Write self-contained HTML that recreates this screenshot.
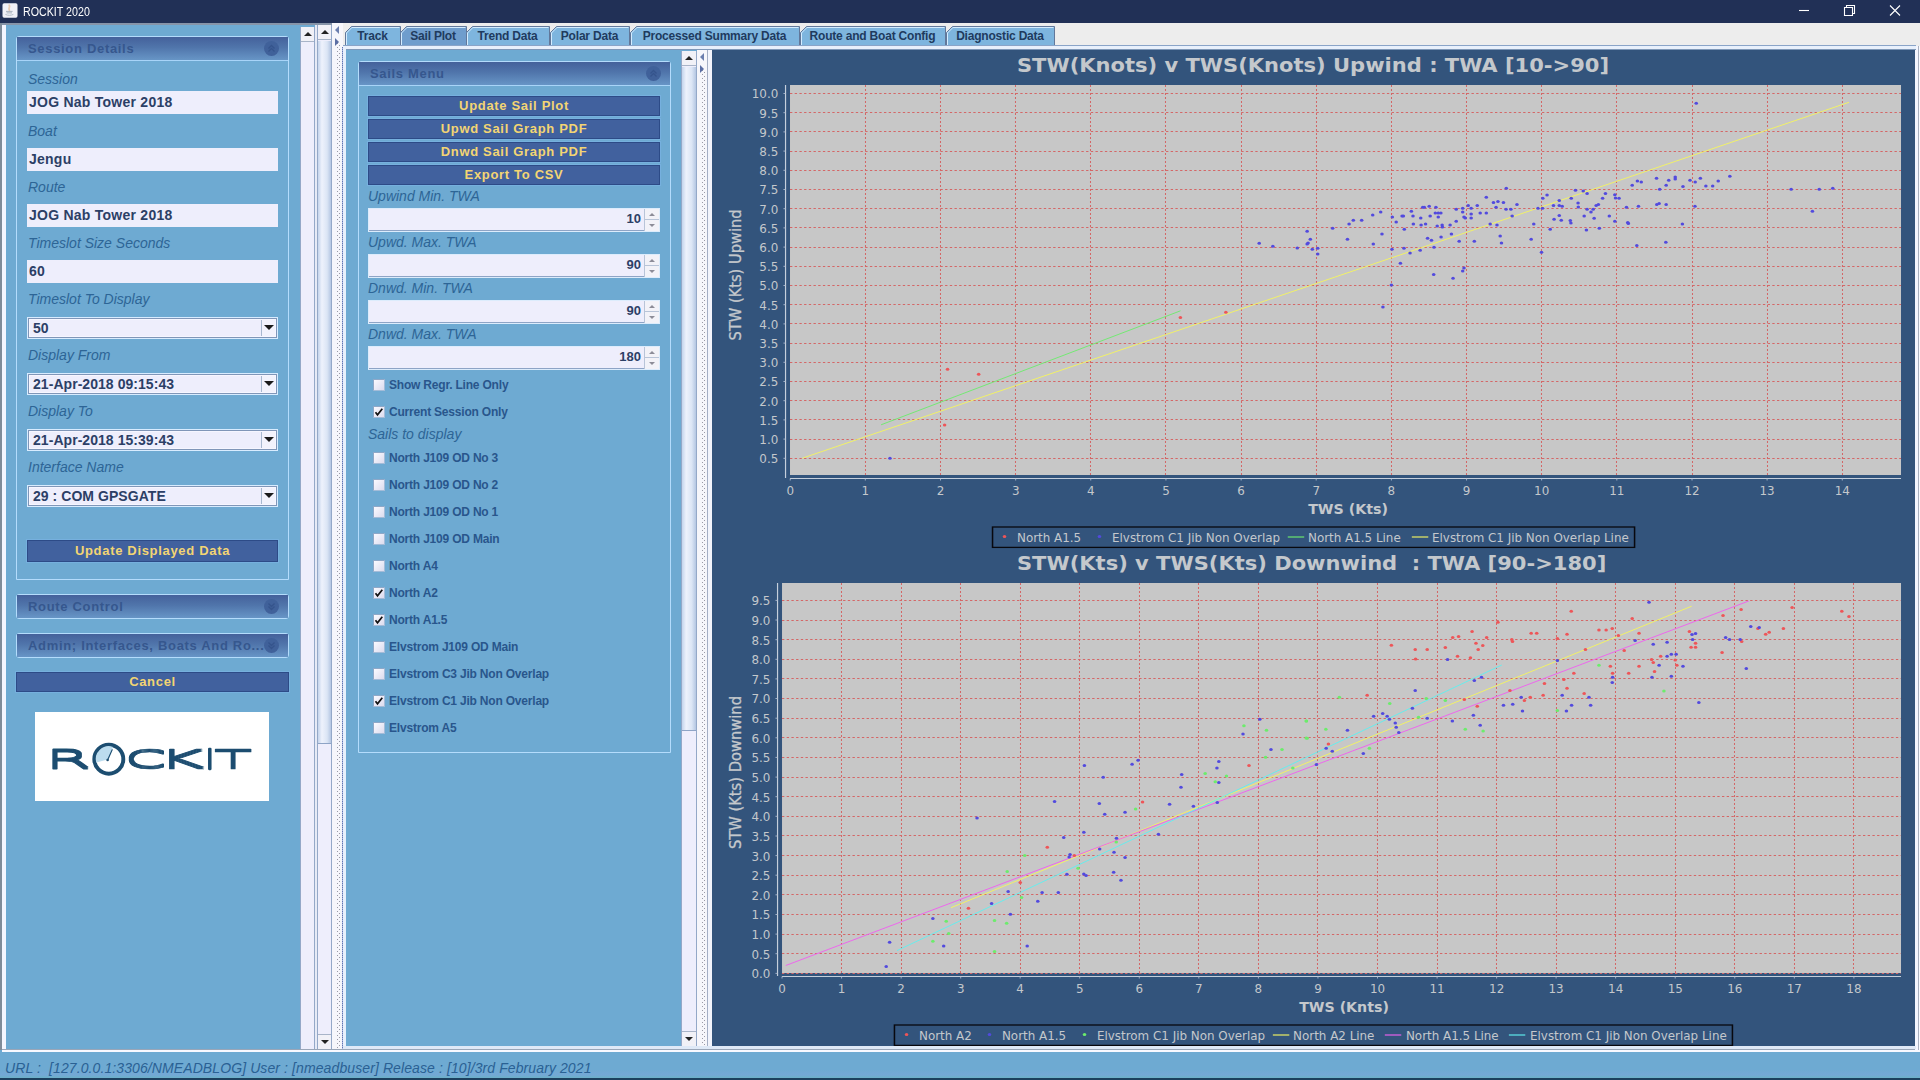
<!DOCTYPE html>
<html lang="en"><head><meta charset="utf-8"><title>ROCKIT 2020</title>
<style>
*{box-sizing:border-box;margin:0;padding:0}
html,body{width:1920px;height:1080px;overflow:hidden}
body{position:relative;background:#6eaad2;font-family:"Liberation Sans",sans-serif;font-size:13px;color:#2c4370}
.abs{position:absolute}
#titlebar{left:0;top:0;width:1920px;height:23px;background:#213056}
#ttl{left:23px;top:4px;color:#fff;font-size:12px;line-height:16px;transform:scaleX(.89);transform-origin:0 0;white-space:nowrap}
.lbl{font-style:italic;font-size:14px;color:#2d6596;line-height:16px;white-space:nowrap}
.tf{background:#eeeefc;height:23px;font-weight:bold;font-size:14px;color:#2c3f66;line-height:23px;padding-left:2px;white-space:nowrap;letter-spacing:0.25px}
.cb{background:#eeeefc;height:22px;border:1px solid #d8ecff;box-shadow:inset 0 0 0 1px #8096b8, inset 0 0 0 2px #f6f6ff;font-weight:bold;font-size:14px;color:#2c3f66;line-height:20px;padding-left:5px;white-space:nowrap;letter-spacing:0.05px}
.cb i{position:absolute;right:2px;top:2px;width:14px;height:16px;border-left:1px solid #a8b8d0;background:#f2f2fc}
.cb i:after{content:"";position:absolute;left:2px;top:5px;border-left:5px solid transparent;border-right:5px solid transparent;border-top:5px solid #1a1a1a}
.btn{background:#41619e;border:1px solid #2d4b87;box-shadow:0 0 0 1px #76b0de;color:#f3d573;font-weight:bold;font-size:13px;text-align:center;white-space:nowrap;letter-spacing:0.68px}
.cp{border:1px solid #b4dcfc;border-radius:3px 3px 0 0}
.cph{left:0;top:0;right:0;height:24px;background:linear-gradient(#44619b,#5075ab 45%,#6795c6);border-bottom:1px solid #a8d4f8}
.cpt{left:11px;top:4px;font-weight:bold;font-size:13px;color:#36578e;line-height:16px;white-space:nowrap;letter-spacing:0.68px}
.circ{width:15px;height:15px;border-radius:8px;background:#5373ae}
.chk{width:12px;height:12px;background:linear-gradient(135deg,#fafaff,#dcdcee);border:1px solid #a4bcd8;border-top-color:#8ea8c8;border-left-color:#8ea8c8}
.ckl{font-weight:bold;font-size:12px;color:#29568c;line-height:14px;white-space:nowrap;letter-spacing:-0.2px}
.sp{background:#eeeefc;height:24px;border:1px solid #dcecfc;box-shadow:inset 0 -1px 0 #8ea4c6;font-weight:bold;font-size:13px;color:#2c3f66;line-height:20px;text-align:right;padding-right:18px}
.tab{top:27px;height:18px;font-weight:bold;font-size:12px;color:#1f3b5e;line-height:18px;text-align:center;white-space:nowrap;letter-spacing:-0.2px;padding-right:2px}
</style></head>
<body>
<div id="titlebar" class="abs">
<svg class="abs" style="left:2px;top:3px" width="16" height="15" viewBox="0 0 16 15"><rect x="0.5" y="0.3" width="15" height="14.4" rx="1.6" fill="#f0f1f7"/><path d="M7.2 2.2c1.6 1.6-1.4 2.8 0.2 5" stroke="#e9cdb4" stroke-width="1.8" fill="none" stroke-linecap="round"/><path d="M4 8.4h6.6M4.6 9.9h5.4" stroke="#a9b2be" stroke-width="1" fill="none"/><path d="M3.4 11.4c2.4 1.2 5.6 1.2 8 0" stroke="#b4bdc8" stroke-width="1" fill="none"/></svg>
<div id="ttl" class="abs">ROCKIT 2020</div>
<svg class="abs" style="left:1790px;top:0" width="130" height="23" viewBox="0 0 130 23"><g stroke="#fff" stroke-width="1.1" fill="none"><path d="M9 10.5h10"/><path d="M54.5 7.5h8v8h-8z"/><path d="M56.5 7.5v-2h8v8h-2"/><path d="M100 5.5l10 10M110 5.5l-10 10"/></g></svg>
</div>
<div class="abs" style="left:0;top:23px;width:332px;height:2px;background:#8694a8"></div>
<div class="abs" style="left:0;top:23px;width:2px;height:1027px;background:#7f8c9a"></div>
<div class="abs" style="left:2px;top:25px;width:4px;height:1026px;background:#f4f6ff"></div>
<div class="abs" style="left:2px;top:1049px;width:1918px;height:3px;background:#f8f9ff;border-top:1px solid #9aa6b8"></div>
<div class="abs cp" style="left:16px;top:36px;width:273px;height:544px">
<div class="abs cph"><div class="abs cpt">Session Details</div><svg class="abs" style="left:247px;top:4px" width="15" height="15" viewBox="0 0 15 15"><circle cx="7.5" cy="7.5" r="7.5" fill="#40619a"/><path d="M4.5 7.5l3-3 3 3M4.5 10.5l3-3 3 3" stroke="#35548c" stroke-width="1.3" fill="none"/></svg></div>
<div class="abs lbl" style="left:11px;top:34px">Session</div>
<div class="abs lbl" style="left:11px;top:86px">Boat</div>
<div class="abs lbl" style="left:11px;top:142px">Route</div>
<div class="abs lbl" style="left:11px;top:198px">Timeslot Size Seconds</div>
<div class="abs lbl" style="left:11px;top:254px">Timeslot To Display</div>
<div class="abs lbl" style="left:11px;top:310px">Display From</div>
<div class="abs lbl" style="left:11px;top:366px">Display To</div>
<div class="abs lbl" style="left:11px;top:422px">Interface Name</div>
<div class="abs tf" style="left:10px;top:54px;width:251px">JOG Nab Tower 2018</div>
<div class="abs tf" style="left:10px;top:111px;width:251px">Jengu</div>
<div class="abs tf" style="left:10px;top:167px;width:251px">JOG Nab Tower 2018</div>
<div class="abs tf" style="left:10px;top:223px;width:251px">60</div>
<div class="abs cb" style="left:10px;top:280px;width:251px">50<i></i></div>
<div class="abs cb" style="left:10px;top:336px;width:251px">21-Apr-2018 09:15:43<i></i></div>
<div class="abs cb" style="left:10px;top:392px;width:251px">21-Apr-2018 15:39:43<i></i></div>
<div class="abs cb" style="left:10px;top:448px;width:251px">29 : COM GPSGATE<i></i></div>
<div class="abs btn" style="left:10px;top:503px;width:251px;height:22px;line-height:20px">Update Displayed Data</div>
</div>
<div class="abs cp" style="left:16px;top:594px;width:273px;height:25px;border-radius:3px"><div class="abs cph" style="border-bottom:none;height:23px"><div class="abs cpt">Route Control</div><svg class="abs" style="left:247px;top:4px" width="15" height="15" viewBox="0 0 15 15"><circle cx="7.5" cy="7.5" r="7.5" fill="#40619a"/><path d="M4.5 4.5l3 3 3-3M4.5 7.5l3 3 3-3" stroke="#35548c" stroke-width="1.3" fill="none"/></svg></div></div>
<div class="abs cp" style="left:16px;top:633px;width:273px;height:25px;border-radius:3px"><div class="abs cph" style="border-bottom:none;height:23px"><div class="abs cpt">Admin; Interfaces, Boats And Ro...</div><svg class="abs" style="left:247px;top:4px" width="15" height="15" viewBox="0 0 15 15"><circle cx="7.5" cy="7.5" r="7.5" fill="#40619a"/><path d="M4.5 4.5l3 3 3-3M4.5 7.5l3 3 3-3" stroke="#35548c" stroke-width="1.3" fill="none"/></svg></div></div>
<div class="abs btn" style="left:16px;top:672px;width:273px;height:20px;line-height:18px">Cancel</div>
<div class="abs" style="left:35px;top:712px;width:234px;height:89px;background:#fff"></div>
<svg class="abs" style="left:35px;top:712px" width="234" height="89" viewBox="0 0 234 89">
<filter id="lgm" x="-5%" y="-20%" width="110%" height="140%"><feMorphology operator="dilate" radius="0 1"/></filter>
<g filter="url(#lgm)" font-family="'DejaVu Sans Light','DejaVu Sans',sans-serif" font-weight="200" font-size="24.2" fill="#1c4d70" stroke="#1c4d70" stroke-width="0.75" stroke-linejoin="round">
<text transform="translate(10.3 55.9) scale(2.72 1)">R</text>
<text transform="translate(89.8 55.9) scale(2.46 1)">C</text>
<text transform="translate(123 55.9) scale(2.9 1)">K</text>
<text transform="translate(171.3 55.9)" stroke-width="2.3">I</text>
<text transform="translate(179.6 55.9) scale(2.52 1)">T</text>
</g>
<circle cx="73.8" cy="47.2" r="14.5" fill="#ffffff" stroke="#1c4d70" stroke-width="3.9"/>
<path d="M73.8 47.2L61.2 50.5A13 13 0 0 1 78 34.9Z" fill="#bcdcee"/>
<path d="M72.6 48l4.6-10.2" stroke="#1c4d70" stroke-width="1.1" stroke-linecap="round"/><circle cx="72.6" cy="48" r="1.3" fill="#1c4d70"/>
</svg>
<div class="abs" style="left:300px;top:27px;width:15px;height:1022px;background:#eeeefc;border-left:1px solid #94a8c8;border-right:1px solid #94a8c8"><div class="abs" style="left:0;top:0;width:100%;height:15px;background:#f1f1f7;border-bottom:1px solid #a8b4c8"><div class="abs" style="left:3px;top:5px;border-left:4px solid transparent;border-right:4px solid transparent;border-bottom:4px solid #222"></div></div></div>
<div class="abs" style="left:317px;top:25px;width:15px;height:1024px;background:#eeeefc;border-left:1px solid #94a8c8;border-right:1px solid #94a8c8"><div class="abs" style="left:0;top:16px;width:100%;height:703px;background:linear-gradient(90deg,#c4d4ec,#eef2fc 30%,#dbe5f5 70%,#b4c6e2);border-bottom:1px solid #8ea4c6"></div><div class="abs" style="left:0;top:0;width:100%;height:15px;background:#f1f1f7;border-bottom:1px solid #a8b4c8"><div class="abs" style="left:3px;top:5px;border-left:4px solid transparent;border-right:4px solid transparent;border-bottom:4px solid #222"></div></div><div class="abs" style="left:0;bottom:0;width:100%;height:15px;background:#f1f1f7;border-top:1px solid #a8b4c8"><div class="abs" style="left:3px;top:5px;border-left:4px solid transparent;border-right:4px solid transparent;border-top:4px solid #222"></div></div></div>
<div class="abs" style="left:315px;top:25px;width:2px;height:1024px;background:#e6eaf6"></div>
<div class="abs" style="left:332px;top:23px;width:11px;height:1026px;background:#f6f6fb"><div class="abs" style="left:5px;top:20px;width:1px;bottom:0;background-image:linear-gradient(#9a9aa6 1px,transparent 1px);background-size:1px 4px"></div><div class="abs" style="left:7px;top:22px;width:1px;bottom:0;background-image:linear-gradient(#9a9aa6 1px,transparent 1px);background-size:1px 4px"></div><div class="abs" style="left:10px;top:24px;width:1px;bottom:0;background-image:linear-gradient(#6176b4 1px,#aab6dc 1px);background-size:1px 2px"></div><div class="abs" style="left:3px;top:3px;border-top:4px solid transparent;border-bottom:4px solid transparent;border-right:4px solid #6b7eae"></div><div class="abs" style="left:3px;top:15px;border-top:4px solid transparent;border-bottom:4px solid transparent;border-left:4px solid #5b6ea4"></div></div>
<div class="abs" style="left:0;top:1070px;width:1920px;height:8px;background:linear-gradient(#6eaad2,#74a8d6 60%,#6cb0c8)"></div><div class="abs lbl" style="left:5px;top:1060px;color:#2a6194;letter-spacing:0.1px">URL :&nbsp; [127.0.0.1:3306/NMEADBLOG] User : [nmeadbuser] Release : [10]/3rd February 2021</div><div class="abs" style="left:0;top:1078px;width:1920px;height:2px;background:#1c3f5e"></div>
<div class="abs" style="left:343px;top:23px;width:1577px;height:23px;background:#ededed"></div>
<div class="abs" style="left:1915px;top:46px;width:5px;height:1004px;background:#f4f6ff;border-right:1px solid #f8faff"></div><div class="abs" style="left:1918px;top:46px;width:1px;height:1004px;background:#a8b0c0"></div>
<svg class="abs" style="left:343px;top:25px" width="1572" height="22" viewBox="343 25 1572 22"><path d="M345.5 45.5 V32.5 L351.5 26.5 H400.5 V45.5" fill="#7eb5de" stroke="#62789a" stroke-width="1"/><path d="M346.5 45 V33 L351.9 27.5 H399.5" fill="none" stroke="#d4ecff" stroke-width="1"/><path d="M400.5 47 V32.5 L406.5 26.5 H466.5 V47" fill="#6f9dcd" stroke="#62789a" stroke-width="1"/><path d="M401.5 47 V33 L406.9 27.5 H465.5" fill="none" stroke="#d4ecff" stroke-width="1"/><path d="M466.5 45.5 V32.5 L472.5 26.5 H549.5 V45.5" fill="#7eb5de" stroke="#62789a" stroke-width="1"/><path d="M467.5 45 V33 L472.9 27.5 H548.5" fill="none" stroke="#d4ecff" stroke-width="1"/><path d="M550.5 45.5 V32.5 L556.5 26.5 H629.5 V45.5" fill="#7eb5de" stroke="#62789a" stroke-width="1"/><path d="M551.5 45 V33 L556.9 27.5 H628.5" fill="none" stroke="#d4ecff" stroke-width="1"/><path d="M630.5 45.5 V32.5 L636.5 26.5 H799.5 V45.5" fill="#7eb5de" stroke="#62789a" stroke-width="1"/><path d="M631.5 45 V33 L636.9 27.5 H798.5" fill="none" stroke="#d4ecff" stroke-width="1"/><path d="M800.5 45.5 V32.5 L806.5 26.5 H945.5 V45.5" fill="#7eb5de" stroke="#62789a" stroke-width="1"/><path d="M801.5 45 V33 L806.9 27.5 H944.5" fill="none" stroke="#d4ecff" stroke-width="1"/><path d="M946.5 45.5 V32.5 L952.5 26.5 H1054.5 V45.5" fill="#7eb5de" stroke="#62789a" stroke-width="1"/><path d="M947.5 45 V33 L952.9 27.5 H1053.5" fill="none" stroke="#d4ecff" stroke-width="1"/></svg>
<div class="abs tab" style="left:346px;width:55px">Track</div>
<div class="abs tab" style="left:401px;width:66px">Sail Plot</div>
<div class="abs tab" style="left:467px;width:83px">Trend Data</div>
<div class="abs tab" style="left:551px;width:79px">Polar Data</div>
<div class="abs tab" style="left:631px;width:169px">Processed Summary Data</div>
<div class="abs tab" style="left:801px;width:145px">Route and Boat Config</div>
<div class="abs tab" style="left:947px;width:108px">Diagnostic Data</div>
<div class="abs" style="left:343px;top:45px;width:1573px;height:5px;background:#e8f0fc;border-top:1px solid #8aa4c8;border-bottom:1px solid #7f98b8"></div>
<div class="abs" style="left:343px;top:46px;width:3px;height:1003px;background:#e8f0fc"></div>
<div class="abs" style="left:343px;top:1046px;width:1573px;height:3px;background:#dfe9f7"></div>
<div class="abs cp" style="left:358px;top:61px;width:313px;height:692px">
<div class="abs cph"><div class="abs cpt">Sails Menu</div><svg class="abs" style="left:287px;top:4px" width="15" height="15" viewBox="0 0 15 15"><circle cx="7.5" cy="7.5" r="7.5" fill="#40619a"/><path d="M4.5 7.5l3-3 3 3M4.5 10.5l3-3 3 3" stroke="#35548c" stroke-width="1.3" fill="none"/></svg></div>
<div class="abs btn" style="left:9px;top:34px;width:292px;height:20px;line-height:18px">Update Sail Plot</div>
<div class="abs btn" style="left:9px;top:57px;width:292px;height:20px;line-height:18px">Upwd Sail Graph PDF</div>
<div class="abs btn" style="left:9px;top:80px;width:292px;height:20px;line-height:18px">Dnwd Sail Graph PDF</div>
<div class="abs btn" style="left:9px;top:103px;width:292px;height:20px;line-height:18px">Export To CSV</div>
<div class="abs lbl" style="left:9px;top:126px">Upwind Min. TWA</div>
<div class="abs sp" style="left:9px;top:146px;width:292px">10<div class="abs" style="right:0;top:0;width:15px;height:22px;background:#f2f2f8;border-left:1px solid #b8c4d8"><div class="abs" style="left:0;top:10px;width:14px;height:1px;background:#b8c4d8"></div><div class="abs" style="left:4px;top:4px;border-left:3px solid transparent;border-right:3px solid transparent;border-bottom:3px solid #8c8c98"></div><div class="abs" style="left:4px;top:15px;border-left:3px solid transparent;border-right:3px solid transparent;border-top:3px solid #8c8c98"></div></div></div>
<div class="abs lbl" style="left:9px;top:172px">Upwd. Max. TWA</div>
<div class="abs sp" style="left:9px;top:192px;width:292px">90<div class="abs" style="right:0;top:0;width:15px;height:22px;background:#f2f2f8;border-left:1px solid #b8c4d8"><div class="abs" style="left:0;top:10px;width:14px;height:1px;background:#b8c4d8"></div><div class="abs" style="left:4px;top:4px;border-left:3px solid transparent;border-right:3px solid transparent;border-bottom:3px solid #8c8c98"></div><div class="abs" style="left:4px;top:15px;border-left:3px solid transparent;border-right:3px solid transparent;border-top:3px solid #8c8c98"></div></div></div>
<div class="abs lbl" style="left:9px;top:218px">Dnwd. Min. TWA</div>
<div class="abs sp" style="left:9px;top:238px;width:292px">90<div class="abs" style="right:0;top:0;width:15px;height:22px;background:#f2f2f8;border-left:1px solid #b8c4d8"><div class="abs" style="left:0;top:10px;width:14px;height:1px;background:#b8c4d8"></div><div class="abs" style="left:4px;top:4px;border-left:3px solid transparent;border-right:3px solid transparent;border-bottom:3px solid #8c8c98"></div><div class="abs" style="left:4px;top:15px;border-left:3px solid transparent;border-right:3px solid transparent;border-top:3px solid #8c8c98"></div></div></div>
<div class="abs lbl" style="left:9px;top:264px">Dnwd. Max. TWA</div>
<div class="abs sp" style="left:9px;top:284px;width:292px">180<div class="abs" style="right:0;top:0;width:15px;height:22px;background:#f2f2f8;border-left:1px solid #b8c4d8"><div class="abs" style="left:0;top:10px;width:14px;height:1px;background:#b8c4d8"></div><div class="abs" style="left:4px;top:4px;border-left:3px solid transparent;border-right:3px solid transparent;border-bottom:3px solid #8c8c98"></div><div class="abs" style="left:4px;top:15px;border-left:3px solid transparent;border-right:3px solid transparent;border-top:3px solid #8c8c98"></div></div></div>
<div class="abs chk" style="left:14px;top:317px"></div><div class="abs ckl" style="left:30px;top:316px">Show Regr. Line Only</div>
<div class="abs chk" style="left:14px;top:344px"><svg class="abs" style="left:0;top:0" width="10" height="10" viewBox="0 0 10 10"><path d="M1.5 5.2l2 2.6L8.3 1.8" stroke="#111" stroke-width="1.7" fill="none"/></svg></div><div class="abs ckl" style="left:30px;top:343px">Current Session Only</div>
<div class="abs lbl" style="left:9px;top:364px">Sails to display</div>
<div class="abs chk" style="left:14px;top:390px"></div><div class="abs ckl" style="left:30px;top:389px">North J109 OD No 3</div>
<div class="abs chk" style="left:14px;top:417px"></div><div class="abs ckl" style="left:30px;top:416px">North J109 OD No 2</div>
<div class="abs chk" style="left:14px;top:444px"></div><div class="abs ckl" style="left:30px;top:443px">North J109 OD No 1</div>
<div class="abs chk" style="left:14px;top:471px"></div><div class="abs ckl" style="left:30px;top:470px">North J109 OD Main</div>
<div class="abs chk" style="left:14px;top:498px"></div><div class="abs ckl" style="left:30px;top:497px">North A4</div>
<div class="abs chk" style="left:14px;top:525px"><svg class="abs" style="left:0;top:0" width="10" height="10" viewBox="0 0 10 10"><path d="M1.5 5.2l2 2.6L8.3 1.8" stroke="#111" stroke-width="1.7" fill="none"/></svg></div><div class="abs ckl" style="left:30px;top:524px">North A2</div>
<div class="abs chk" style="left:14px;top:552px"><svg class="abs" style="left:0;top:0" width="10" height="10" viewBox="0 0 10 10"><path d="M1.5 5.2l2 2.6L8.3 1.8" stroke="#111" stroke-width="1.7" fill="none"/></svg></div><div class="abs ckl" style="left:30px;top:551px">North A1.5</div>
<div class="abs chk" style="left:14px;top:579px"></div><div class="abs ckl" style="left:30px;top:578px">Elvstrom J109 OD Main</div>
<div class="abs chk" style="left:14px;top:606px"></div><div class="abs ckl" style="left:30px;top:605px">Elvstrom C3 Jib Non Overlap</div>
<div class="abs chk" style="left:14px;top:633px"><svg class="abs" style="left:0;top:0" width="10" height="10" viewBox="0 0 10 10"><path d="M1.5 5.2l2 2.6L8.3 1.8" stroke="#111" stroke-width="1.7" fill="none"/></svg></div><div class="abs ckl" style="left:30px;top:632px">Elvstrom C1 Jib Non Overlap</div>
<div class="abs chk" style="left:14px;top:660px"></div><div class="abs ckl" style="left:30px;top:659px">Elvstrom A5</div>
</div>
<div class="abs" style="left:681px;top:51px;width:16px;height:995px;background:#eeeefc;border-left:1px solid #94a8c8;border-right:1px solid #94a8c8"><div class="abs" style="left:0;top:16px;width:100%;height:664px;background:linear-gradient(90deg,#c4d4ec,#eef2fc 30%,#dbe5f5 70%,#b4c6e2);border-bottom:1px solid #8ea4c6"></div><div class="abs" style="left:0;top:0;width:100%;height:15px;background:#f1f1f7;border-bottom:1px solid #a8b4c8"><div class="abs" style="left:3px;top:5px;border-left:4px solid transparent;border-right:4px solid transparent;border-bottom:4px solid #222"></div></div><div class="abs" style="left:0;bottom:0;width:100%;height:15px;background:#f1f1f7;border-top:1px solid #a8b4c8"><div class="abs" style="left:3px;top:5px;border-left:4px solid transparent;border-right:4px solid transparent;border-top:4px solid #222"></div></div></div>
<div class="abs" style="left:697px;top:50px;width:11px;height:996px;background:#f6f6fb"><div class="abs" style="left:5px;top:20px;width:1px;bottom:0;background-image:linear-gradient(#9a9aa6 1px,transparent 1px);background-size:1px 4px"></div><div class="abs" style="left:7px;top:22px;width:1px;bottom:0;background-image:linear-gradient(#9a9aa6 1px,transparent 1px);background-size:1px 4px"></div><div class="abs" style="left:10px;top:0;width:1px;bottom:0;background:#a4aec4"></div><div class="abs" style="left:3px;top:3px;border-top:4px solid transparent;border-bottom:4px solid transparent;border-right:4px solid #6b7eae"></div><div class="abs" style="left:3px;top:15px;border-top:4px solid transparent;border-bottom:4px solid transparent;border-left:4px solid #5b6ea4"></div></div>
<div class="abs" style="left:708px;top:50px;width:4px;height:996px;background:#f2f4fc"></div>
<svg class="abs" style="left:712px;top:50px" width="1203" height="996" viewBox="0 0 1203 996" font-family="'DejaVu Sans Condensed','DejaVu Sans',sans-serif" fill="#c4c8cc">
<rect x="0" y="0" width="1203" height="996" fill="#33547c"/>
<g transform="scale(1.17480 1)">
<rect x="66.4" y="35" width="945.7" height="390" fill="#c7c7c7"/>
<g transform="scale(0.851205 1)" stroke="#d46666" stroke-width="1" fill="none" shape-rendering="crispEdges"><path stroke-dasharray="2 2" d="M153.5 35 V425"/><path stroke-dasharray="2 2" d="M228.5 35 V425"/><path stroke-dasharray="2 2" d="M303.5 35 V425"/><path stroke-dasharray="2 2" d="M378.5 35 V425"/><path stroke-dasharray="2 2" d="M453.5 35 V425"/><path stroke-dasharray="2 2" d="M529.5 35 V425"/><path stroke-dasharray="2 2" d="M604.5 35 V425"/><path stroke-dasharray="2 2" d="M679.5 35 V425"/><path stroke-dasharray="2 2" d="M754.5 35 V425"/><path stroke-dasharray="2 2" d="M829.5 35 V425"/><path stroke-dasharray="2 2" d="M904.5 35 V425"/><path stroke-dasharray="2 2" d="M980.5 35 V425"/><path stroke-dasharray="2 2" d="M1055.5 35 V425"/><path stroke-dasharray="2 2" d="M1130.5 35 V425"/><path stroke-dasharray="2.35 2.35" d="M78.0 43.5 H1189.0"/><path stroke-dasharray="2.35 2.35" d="M78.0 62.5 H1189.0"/><path stroke-dasharray="2.35 2.35" d="M78.0 81.5 H1189.0"/><path stroke-dasharray="2.35 2.35" d="M78.0 101.5 H1189.0"/><path stroke-dasharray="2.35 2.35" d="M78.0 120.5 H1189.0"/><path stroke-dasharray="2.35 2.35" d="M78.0 139.5 H1189.0"/><path stroke-dasharray="2.35 2.35" d="M78.0 158.5 H1189.0"/><path stroke-dasharray="2.35 2.35" d="M78.0 177.5 H1189.0"/><path stroke-dasharray="2.35 2.35" d="M78.0 197.5 H1189.0"/><path stroke-dasharray="2.35 2.35" d="M78.0 216.5 H1189.0"/><path stroke-dasharray="2.35 2.35" d="M78.0 235.5 H1189.0"/><path stroke-dasharray="2.35 2.35" d="M78.0 254.5 H1189.0"/><path stroke-dasharray="2.35 2.35" d="M78.0 273.5 H1189.0"/><path stroke-dasharray="2.35 2.35" d="M78.0 293.5 H1189.0"/><path stroke-dasharray="2.35 2.35" d="M78.0 312.5 H1189.0"/><path stroke-dasharray="2.35 2.35" d="M78.0 331.5 H1189.0"/><path stroke-dasharray="2.35 2.35" d="M78.0 350.5 H1189.0"/><path stroke-dasharray="2.35 2.35" d="M78.0 369.5 H1189.0"/><path stroke-dasharray="2.35 2.35" d="M78.0 389.5 H1189.0"/><path stroke-dasharray="2.35 2.35" d="M78.0 408.5 H1189.0"/></g>
<path d="M62.6 35 V428.0 M66.4 428.5 H1012.1" stroke="#c5cfdc" stroke-width="1" fill="none"/>
<g stroke="#aebbd0" stroke-width="0.8" fill="none"><path d="M66.6 428.5 v2"/><path d="M130.5 428.5 v2"/><path d="M194.5 428.5 v2"/><path d="M258.5 428.5 v2"/><path d="M322.4 428.5 v2"/><path d="M386.4 428.5 v2"/><path d="M450.4 428.5 v2"/><path d="M514.3 428.5 v2"/><path d="M578.3 428.5 v2"/><path d="M642.3 428.5 v2"/><path d="M706.2 428.5 v2"/><path d="M770.2 428.5 v2"/><path d="M834.2 428.5 v2"/><path d="M898.1 428.5 v2"/><path d="M962.1 428.5 v2"/><path d="M62.6 43.5 h-1.8"/><path d="M62.6 62.7 h-1.8"/><path d="M62.6 81.9 h-1.8"/><path d="M62.6 101.1 h-1.8"/><path d="M62.6 120.3 h-1.8"/><path d="M62.6 139.5 h-1.8"/><path d="M62.6 158.7 h-1.8"/><path d="M62.6 177.9 h-1.8"/><path d="M62.6 197.1 h-1.8"/><path d="M62.6 216.3 h-1.8"/><path d="M62.6 235.5 h-1.8"/><path d="M62.6 254.7 h-1.8"/><path d="M62.6 273.9 h-1.8"/><path d="M62.6 293.1 h-1.8"/><path d="M62.6 312.3 h-1.8"/><path d="M62.6 331.5 h-1.8"/><path d="M62.6 350.7 h-1.8"/><path d="M62.6 369.9 h-1.8"/><path d="M62.6 389.1 h-1.8"/><path d="M62.6 408.3 h-1.8"/></g>
<g><text transform="translate(66.6 444.6) scale(0.940 1)" font-size="12" text-anchor="middle" xml:space="preserve">0</text><text transform="translate(130.5 444.6) scale(0.940 1)" font-size="12" text-anchor="middle" xml:space="preserve">1</text><text transform="translate(194.5 444.6) scale(0.940 1)" font-size="12" text-anchor="middle" xml:space="preserve">2</text><text transform="translate(258.5 444.6) scale(0.940 1)" font-size="12" text-anchor="middle" xml:space="preserve">3</text><text transform="translate(322.4 444.6) scale(0.940 1)" font-size="12" text-anchor="middle" xml:space="preserve">4</text><text transform="translate(386.4 444.6) scale(0.940 1)" font-size="12" text-anchor="middle" xml:space="preserve">5</text><text transform="translate(450.4 444.6) scale(0.940 1)" font-size="12" text-anchor="middle" xml:space="preserve">6</text><text transform="translate(514.3 444.6) scale(0.940 1)" font-size="12" text-anchor="middle" xml:space="preserve">7</text><text transform="translate(578.3 444.6) scale(0.940 1)" font-size="12" text-anchor="middle" xml:space="preserve">8</text><text transform="translate(642.3 444.6) scale(0.940 1)" font-size="12" text-anchor="middle" xml:space="preserve">9</text><text transform="translate(706.2 444.6) scale(0.940 1)" font-size="12" text-anchor="middle" xml:space="preserve">10</text><text transform="translate(770.2 444.6) scale(0.940 1)" font-size="12" text-anchor="middle" xml:space="preserve">11</text><text transform="translate(834.2 444.6) scale(0.940 1)" font-size="12" text-anchor="middle" xml:space="preserve">12</text><text transform="translate(898.1 444.6) scale(0.940 1)" font-size="12" text-anchor="middle" xml:space="preserve">13</text><text transform="translate(962.1 444.6) scale(0.940 1)" font-size="12" text-anchor="middle" xml:space="preserve">14</text><text transform="translate(56.4 48.4) scale(0.940 1)" font-size="12" text-anchor="end" xml:space="preserve">10.0</text><text transform="translate(56.4 67.6) scale(0.940 1)" font-size="12" text-anchor="end" xml:space="preserve">9.5</text><text transform="translate(56.4 86.8) scale(0.940 1)" font-size="12" text-anchor="end" xml:space="preserve">9.0</text><text transform="translate(56.4 106.0) scale(0.940 1)" font-size="12" text-anchor="end" xml:space="preserve">8.5</text><text transform="translate(56.4 125.2) scale(0.940 1)" font-size="12" text-anchor="end" xml:space="preserve">8.0</text><text transform="translate(56.4 144.4) scale(0.940 1)" font-size="12" text-anchor="end" xml:space="preserve">7.5</text><text transform="translate(56.4 163.6) scale(0.940 1)" font-size="12" text-anchor="end" xml:space="preserve">7.0</text><text transform="translate(56.4 182.8) scale(0.940 1)" font-size="12" text-anchor="end" xml:space="preserve">6.5</text><text transform="translate(56.4 202.0) scale(0.940 1)" font-size="12" text-anchor="end" xml:space="preserve">6.0</text><text transform="translate(56.4 221.2) scale(0.940 1)" font-size="12" text-anchor="end" xml:space="preserve">5.5</text><text transform="translate(56.4 240.4) scale(0.940 1)" font-size="12" text-anchor="end" xml:space="preserve">5.0</text><text transform="translate(56.4 259.6) scale(0.940 1)" font-size="12" text-anchor="end" xml:space="preserve">4.5</text><text transform="translate(56.4 278.8) scale(0.940 1)" font-size="12" text-anchor="end" xml:space="preserve">4.0</text><text transform="translate(56.4 298.0) scale(0.940 1)" font-size="12" text-anchor="end" xml:space="preserve">3.5</text><text transform="translate(56.4 317.2) scale(0.940 1)" font-size="12" text-anchor="end" xml:space="preserve">3.0</text><text transform="translate(56.4 336.4) scale(0.940 1)" font-size="12" text-anchor="end" xml:space="preserve">2.5</text><text transform="translate(56.4 355.6) scale(0.940 1)" font-size="12" text-anchor="end" xml:space="preserve">2.0</text><text transform="translate(56.4 374.8) scale(0.940 1)" font-size="12" text-anchor="end" xml:space="preserve">1.5</text><text transform="translate(56.4 394.0) scale(0.940 1)" font-size="12" text-anchor="end" xml:space="preserve">1.0</text><text transform="translate(56.4 413.2) scale(0.940 1)" font-size="12" text-anchor="end" xml:space="preserve">0.5</text></g>
<text transform="translate(259.6 22.4) scale(0.995 1)" font-size="20" font-weight="bold" xml:space="preserve">STW(Knots) v TWS(Knots) Upwind : TWA [10-&gt;90]</text>
<text transform="translate(541.4 464.4) scale(0.960 1)" font-size="14" font-weight="bold" text-anchor="middle" xml:space="preserve">TWS (Kts)</text>
<text transform="translate(24.6 290.4) rotate(-90)" font-size="14" textLength="131" lengthAdjust="spacingAndGlyphs" stroke="#c4c8cc" stroke-width="0.25">STW (Kts) Upwind</text>
<path d="M143.9 374.8 L398.8 260.8" stroke="#6cec6c" stroke-width="0.85" fill="none"/>
<path d="M76.9 408.2 L967.8 52.3" stroke="#f4f460" stroke-width="0.85" fill="none"/>
<circle cx="398.7" cy="267.4" r="1.5" fill="#ee5558"/><circle cx="437.4" cy="262.3" r="1.5" fill="#ee5558"/><circle cx="200.5" cy="319.2" r="1.5" fill="#ee5558"/><circle cx="227.0" cy="324.3" r="1.5" fill="#ee5558"/><circle cx="198.0" cy="375.1" r="1.5" fill="#ee5558"/>
<circle cx="837.8" cy="53.3" r="1.5" fill="#524ade"/><circle cx="866.4" cy="126.3" r="1.5" fill="#524ade"/><circle cx="856.5" cy="131.1" r="1.5" fill="#524ade"/><circle cx="851.8" cy="136.0" r="1.5" fill="#524ade"/><circle cx="846.0" cy="136.0" r="1.5" fill="#524ade"/><circle cx="841.3" cy="128.2" r="1.5" fill="#524ade"/><circle cx="836.9" cy="132.1" r="1.5" fill="#524ade"/><circle cx="832.5" cy="130.2" r="1.5" fill="#524ade"/><circle cx="826.5" cy="136.6" r="1.5" fill="#524ade"/><circle cx="819.9" cy="126.9" r="1.5" fill="#524ade"/><circle cx="819.9" cy="128.9" r="1.5" fill="#524ade"/><circle cx="814.4" cy="130.2" r="1.5" fill="#524ade"/><circle cx="812.2" cy="135.3" r="1.5" fill="#524ade"/><circle cx="806.7" cy="139.2" r="1.5" fill="#524ade"/><circle cx="804.0" cy="128.2" r="1.5" fill="#524ade"/><circle cx="791.0" cy="132.1" r="1.5" fill="#524ade"/><circle cx="787.7" cy="131.1" r="1.5" fill="#524ade"/><circle cx="783.3" cy="135.3" r="1.5" fill="#524ade"/><circle cx="918.6" cy="139.2" r="1.5" fill="#524ade"/><circle cx="942.5" cy="139.2" r="1.5" fill="#524ade"/><circle cx="954.0" cy="138.2" r="1.5" fill="#524ade"/><circle cx="936.7" cy="161.2" r="1.5" fill="#524ade"/><circle cx="836.7" cy="156.3" r="1.5" fill="#524ade"/><circle cx="826.0" cy="174.1" r="1.5" fill="#524ade"/><circle cx="812.2" cy="154.4" r="1.5" fill="#524ade"/><circle cx="806.2" cy="153.4" r="1.5" fill="#524ade"/><circle cx="804.2" cy="154.4" r="1.5" fill="#524ade"/><circle cx="811.9" cy="192.2" r="1.5" fill="#524ade"/><circle cx="787.2" cy="195.4" r="1.5" fill="#524ade"/><circle cx="788.6" cy="156.3" r="1.5" fill="#524ade"/><circle cx="778.4" cy="157.3" r="1.5" fill="#524ade"/><circle cx="779.5" cy="172.5" r="1.5" fill="#524ade"/><circle cx="780.0" cy="173.4" r="1.5" fill="#524ade"/><circle cx="768.5" cy="144.7" r="1.5" fill="#524ade"/><circle cx="769.1" cy="147.9" r="1.5" fill="#524ade"/><circle cx="772.1" cy="148.2" r="1.5" fill="#524ade"/><circle cx="760.5" cy="143.4" r="1.5" fill="#524ade"/><circle cx="758.1" cy="148.2" r="1.5" fill="#524ade"/><circle cx="754.5" cy="154.4" r="1.5" fill="#524ade"/><circle cx="752.6" cy="155.4" r="1.5" fill="#524ade"/><circle cx="750.1" cy="159.2" r="1.5" fill="#524ade"/><circle cx="748.2" cy="162.1" r="1.5" fill="#524ade"/><circle cx="744.9" cy="159.2" r="1.5" fill="#524ade"/><circle cx="742.4" cy="166.0" r="1.5" fill="#524ade"/><circle cx="750.9" cy="168.3" r="1.5" fill="#524ade"/><circle cx="763.8" cy="166.0" r="1.5" fill="#524ade"/><circle cx="768.5" cy="171.2" r="1.5" fill="#524ade"/><circle cx="755.3" cy="178.3" r="1.5" fill="#524ade"/><circle cx="744.3" cy="179.9" r="1.5" fill="#524ade"/><circle cx="735.0" cy="140.2" r="1.5" fill="#524ade"/><circle cx="741.6" cy="141.1" r="1.5" fill="#524ade"/><circle cx="744.9" cy="143.4" r="1.5" fill="#524ade"/><circle cx="737.2" cy="153.1" r="1.5" fill="#524ade"/><circle cx="737.4" cy="157.0" r="1.5" fill="#524ade"/><circle cx="731.4" cy="148.2" r="1.5" fill="#524ade"/><circle cx="721.2" cy="150.5" r="1.5" fill="#524ade"/><circle cx="721.2" cy="155.4" r="1.5" fill="#524ade"/><circle cx="723.7" cy="156.3" r="1.5" fill="#524ade"/><circle cx="716.3" cy="155.4" r="1.5" fill="#524ade"/><circle cx="721.2" cy="165.4" r="1.5" fill="#524ade"/><circle cx="716.8" cy="169.2" r="1.5" fill="#524ade"/><circle cx="722.9" cy="170.2" r="1.5" fill="#524ade"/><circle cx="730.6" cy="170.5" r="1.5" fill="#524ade"/><circle cx="731.1" cy="173.1" r="1.5" fill="#524ade"/><circle cx="713.5" cy="179.2" r="1.5" fill="#524ade"/><circle cx="710.8" cy="145.0" r="1.5" fill="#524ade"/><circle cx="707.2" cy="148.2" r="1.5" fill="#524ade"/><circle cx="703.1" cy="158.3" r="1.5" fill="#524ade"/><circle cx="706.9" cy="158.3" r="1.5" fill="#524ade"/><circle cx="699.5" cy="174.1" r="1.5" fill="#524ade"/><circle cx="697.3" cy="189.3" r="1.5" fill="#524ade"/><circle cx="706.1" cy="202.2" r="1.5" fill="#524ade"/><circle cx="676.1" cy="138.2" r="1.5" fill="#524ade"/><circle cx="659.1" cy="147.3" r="1.5" fill="#524ade"/><circle cx="665.2" cy="152.4" r="1.5" fill="#524ade"/><circle cx="669.0" cy="151.5" r="1.5" fill="#524ade"/><circle cx="673.7" cy="152.4" r="1.5" fill="#524ade"/><circle cx="667.4" cy="157.3" r="1.5" fill="#524ade"/><circle cx="675.9" cy="159.2" r="1.5" fill="#524ade"/><circle cx="680.0" cy="159.2" r="1.5" fill="#524ade"/><circle cx="685.2" cy="154.4" r="1.5" fill="#524ade"/><circle cx="681.1" cy="166.0" r="1.5" fill="#524ade"/><circle cx="662.4" cy="174.1" r="1.5" fill="#524ade"/><circle cx="668.2" cy="175.1" r="1.5" fill="#524ade"/><circle cx="670.9" cy="186.0" r="1.5" fill="#524ade"/><circle cx="672.0" cy="193.1" r="1.5" fill="#524ade"/><circle cx="651.4" cy="155.4" r="1.5" fill="#524ade"/><circle cx="643.7" cy="155.4" r="1.5" fill="#524ade"/><circle cx="646.2" cy="158.3" r="1.5" fill="#524ade"/><circle cx="639.0" cy="158.3" r="1.5" fill="#524ade"/><circle cx="633.5" cy="159.2" r="1.5" fill="#524ade"/><circle cx="639.0" cy="162.1" r="1.5" fill="#524ade"/><circle cx="640.1" cy="167.0" r="1.5" fill="#524ade"/><circle cx="641.2" cy="167.9" r="1.5" fill="#524ade"/><circle cx="646.2" cy="164.1" r="1.5" fill="#524ade"/><circle cx="646.2" cy="167.9" r="1.5" fill="#524ade"/><circle cx="653.9" cy="163.1" r="1.5" fill="#524ade"/><circle cx="659.1" cy="163.1" r="1.5" fill="#524ade"/><circle cx="633.5" cy="171.2" r="1.5" fill="#524ade"/><circle cx="628.3" cy="175.1" r="1.5" fill="#524ade"/><circle cx="629.4" cy="184.1" r="1.5" fill="#524ade"/><circle cx="636.0" cy="191.2" r="1.5" fill="#524ade"/><circle cx="648.9" cy="191.2" r="1.5" fill="#524ade"/><circle cx="640.1" cy="218.0" r="1.5" fill="#524ade"/><circle cx="639.0" cy="220.9" r="1.5" fill="#524ade"/><circle cx="630.8" cy="228.3" r="1.5" fill="#524ade"/><circle cx="616.2" cy="157.3" r="1.5" fill="#524ade"/><circle cx="610.5" cy="156.3" r="1.5" fill="#524ade"/><circle cx="606.3" cy="157.3" r="1.5" fill="#524ade"/><circle cx="605.0" cy="157.3" r="1.5" fill="#524ade"/><circle cx="595.3" cy="161.2" r="1.5" fill="#524ade"/><circle cx="596.7" cy="166.0" r="1.5" fill="#524ade"/><circle cx="603.3" cy="167.9" r="1.5" fill="#524ade"/><circle cx="611.3" cy="166.0" r="1.5" fill="#524ade"/><circle cx="615.7" cy="163.1" r="1.5" fill="#524ade"/><circle cx="618.2" cy="163.1" r="1.5" fill="#524ade"/><circle cx="620.4" cy="163.1" r="1.5" fill="#524ade"/><circle cx="618.2" cy="167.0" r="1.5" fill="#524ade"/><circle cx="597.0" cy="174.1" r="1.5" fill="#524ade"/><circle cx="603.6" cy="175.1" r="1.5" fill="#524ade"/><circle cx="607.4" cy="174.1" r="1.5" fill="#524ade"/><circle cx="617.3" cy="176.0" r="1.5" fill="#524ade"/><circle cx="621.5" cy="175.1" r="1.5" fill="#524ade"/><circle cx="621.7" cy="177.0" r="1.5" fill="#524ade"/><circle cx="620.6" cy="187.0" r="1.5" fill="#524ade"/><circle cx="609.1" cy="188.3" r="1.5" fill="#524ade"/><circle cx="612.4" cy="190.2" r="1.5" fill="#524ade"/><circle cx="614.6" cy="197.3" r="1.5" fill="#524ade"/><circle cx="602.8" cy="200.2" r="1.5" fill="#524ade"/><circle cx="594.2" cy="203.1" r="1.5" fill="#524ade"/><circle cx="589.0" cy="198.3" r="1.5" fill="#524ade"/><circle cx="586.0" cy="213.2" r="1.5" fill="#524ade"/><circle cx="614.3" cy="224.5" r="1.5" fill="#524ade"/><circle cx="587.4" cy="166.0" r="1.5" fill="#524ade"/><circle cx="588.5" cy="166.0" r="1.5" fill="#524ade"/><circle cx="579.1" cy="167.0" r="1.5" fill="#524ade"/><circle cx="582.4" cy="172.1" r="1.5" fill="#524ade"/><circle cx="589.3" cy="179.2" r="1.5" fill="#524ade"/><circle cx="569.2" cy="162.1" r="1.5" fill="#524ade"/><circle cx="562.4" cy="165.0" r="1.5" fill="#524ade"/><circle cx="553.0" cy="170.2" r="1.5" fill="#524ade"/><circle cx="545.9" cy="170.2" r="1.5" fill="#524ade"/><circle cx="542.3" cy="174.1" r="1.5" fill="#524ade"/><circle cx="528.3" cy="178.3" r="1.5" fill="#524ade"/><circle cx="540.9" cy="189.3" r="1.5" fill="#524ade"/><circle cx="570.3" cy="184.1" r="1.5" fill="#524ade"/><circle cx="562.9" cy="194.1" r="1.5" fill="#524ade"/><circle cx="578.8" cy="199.3" r="1.5" fill="#524ade"/><circle cx="578.3" cy="235.1" r="1.5" fill="#524ade"/><circle cx="571.1" cy="257.1" r="1.5" fill="#524ade"/><circle cx="506.6" cy="181.2" r="1.5" fill="#524ade"/><circle cx="509.3" cy="189.3" r="1.5" fill="#524ade"/><circle cx="507.4" cy="193.1" r="1.5" fill="#524ade"/><circle cx="506.6" cy="194.1" r="1.5" fill="#524ade"/><circle cx="511.0" cy="199.3" r="1.5" fill="#524ade"/><circle cx="515.6" cy="198.3" r="1.5" fill="#524ade"/><circle cx="515.6" cy="204.1" r="1.5" fill="#524ade"/><circle cx="465.8" cy="193.3" r="1.5" fill="#524ade"/><circle cx="477.4" cy="196.2" r="1.5" fill="#524ade"/><circle cx="498.2" cy="198.1" r="1.5" fill="#524ade"/><circle cx="151.5" cy="408.2" r="1.5" fill="#524ade"/>
<rect x="238.8" y="477.0" width="546.5" height="20.4" fill="none" stroke="#08080e" stroke-width="1.3"/>
<circle cx="249.0" cy="486.5" r="1.5" fill="#ee5558"/><text transform="translate(259.6 491.8) scale(0.940 1)" font-size="12" xml:space="preserve">North A1.5</text>
<circle cx="329.8" cy="486.5" r="1.5" fill="#524ade"/><text transform="translate(340.5 491.8) scale(0.940 1)" font-size="12" xml:space="preserve">Elvstrom C1 Jib Non Overlap</text>
<path d="M490.1 487.0 h14" stroke="#6cec6c" stroke-width="1.15"/><text transform="translate(507.3 491.8) scale(0.940 1)" font-size="12" xml:space="preserve">North A1.5 Line</text>
<path d="M595.7 487.0 h14" stroke="#f4f460" stroke-width="1.15"/><text transform="translate(612.9 491.8) scale(0.940 1)" font-size="12" xml:space="preserve">Elvstrom C1 Jib Non Overlap Line</text>
</g>
<g transform="translate(0 498) scale(1.17480 1)">
<rect x="59.6" y="35" width="952.5" height="390" fill="#c7c7c7"/>
<g transform="scale(0.851205 1)" stroke="#d46666" stroke-width="1" fill="none" shape-rendering="crispEdges"><path stroke-dasharray="2 2" d="M129.5 35 V425"/><path stroke-dasharray="2 2" d="M189.5 35 V425"/><path stroke-dasharray="2 2" d="M248.5 35 V425"/><path stroke-dasharray="2 2" d="M308.5 35 V425"/><path stroke-dasharray="2 2" d="M367.5 35 V425"/><path stroke-dasharray="2 2" d="M427.5 35 V425"/><path stroke-dasharray="2 2" d="M486.5 35 V425"/><path stroke-dasharray="2 2" d="M546.5 35 V425"/><path stroke-dasharray="2 2" d="M605.5 35 V425"/><path stroke-dasharray="2 2" d="M665.5 35 V425"/><path stroke-dasharray="2 2" d="M725.5 35 V425"/><path stroke-dasharray="2 2" d="M784.5 35 V425"/><path stroke-dasharray="2 2" d="M844.5 35 V425"/><path stroke-dasharray="2 2" d="M903.5 35 V425"/><path stroke-dasharray="2 2" d="M963.5 35 V425"/><path stroke-dasharray="2 2" d="M1022.5 35 V425"/><path stroke-dasharray="2 2" d="M1082.5 35 V425"/><path stroke-dasharray="2 2" d="M1141.5 35 V425"/><path stroke-dasharray="2.35 2.35" d="M70.0 52.5 H1189.0"/><path stroke-dasharray="2.35 2.35" d="M70.0 72.5 H1189.0"/><path stroke-dasharray="2.35 2.35" d="M70.0 91.5 H1189.0"/><path stroke-dasharray="2.35 2.35" d="M70.0 111.5 H1189.0"/><path stroke-dasharray="2.35 2.35" d="M70.0 130.5 H1189.0"/><path stroke-dasharray="2.35 2.35" d="M70.0 150.5 H1189.0"/><path stroke-dasharray="2.35 2.35" d="M70.0 170.5 H1189.0"/><path stroke-dasharray="2.35 2.35" d="M70.0 189.5 H1189.0"/><path stroke-dasharray="2.35 2.35" d="M70.0 209.5 H1189.0"/><path stroke-dasharray="2.35 2.35" d="M70.0 229.5 H1189.0"/><path stroke-dasharray="2.35 2.35" d="M70.0 248.5 H1189.0"/><path stroke-dasharray="2.35 2.35" d="M70.0 268.5 H1189.0"/><path stroke-dasharray="2.35 2.35" d="M70.0 287.5 H1189.0"/><path stroke-dasharray="2.35 2.35" d="M70.0 307.5 H1189.0"/><path stroke-dasharray="2.35 2.35" d="M70.0 327.5 H1189.0"/><path stroke-dasharray="2.35 2.35" d="M70.0 346.5 H1189.0"/><path stroke-dasharray="2.35 2.35" d="M70.0 366.5 H1189.0"/><path stroke-dasharray="2.35 2.35" d="M70.0 386.5 H1189.0"/><path stroke-dasharray="2.35 2.35" d="M70.0 405.5 H1189.0"/><path stroke-dasharray="2.35 2.35" d="M70.0 425.5 H1189.0"/></g>
<path d="M55.8 35 V428.0 M59.6 428.5 H1012.1" stroke="#c5cfdc" stroke-width="1" fill="none"/>
<g stroke="#aebbd0" stroke-width="0.8" fill="none"><path d="M59.6 428.5 v2"/><path d="M110.3 428.5 v2"/><path d="M161.0 428.5 v2"/><path d="M211.7 428.5 v2"/><path d="M262.3 428.5 v2"/><path d="M313.0 428.5 v2"/><path d="M363.7 428.5 v2"/><path d="M414.4 428.5 v2"/><path d="M465.1 428.5 v2"/><path d="M515.8 428.5 v2"/><path d="M566.5 428.5 v2"/><path d="M617.2 428.5 v2"/><path d="M667.9 428.5 v2"/><path d="M718.5 428.5 v2"/><path d="M769.2 428.5 v2"/><path d="M819.9 428.5 v2"/><path d="M870.6 428.5 v2"/><path d="M921.3 428.5 v2"/><path d="M972.0 428.5 v2"/><path d="M55.8 52.4 h-1.8"/><path d="M55.8 72.0 h-1.8"/><path d="M55.8 91.7 h-1.8"/><path d="M55.8 111.3 h-1.8"/><path d="M55.8 130.9 h-1.8"/><path d="M55.8 150.5 h-1.8"/><path d="M55.8 170.2 h-1.8"/><path d="M55.8 189.8 h-1.8"/><path d="M55.8 209.4 h-1.8"/><path d="M55.8 229.1 h-1.8"/><path d="M55.8 248.7 h-1.8"/><path d="M55.8 268.3 h-1.8"/><path d="M55.8 288.0 h-1.8"/><path d="M55.8 307.6 h-1.8"/><path d="M55.8 327.2 h-1.8"/><path d="M55.8 346.8 h-1.8"/><path d="M55.8 366.5 h-1.8"/><path d="M55.8 386.1 h-1.8"/><path d="M55.8 405.7 h-1.8"/><path d="M55.8 425.4 h-1.8"/></g>
<g><text transform="translate(59.6 444.6) scale(0.940 1)" font-size="12" text-anchor="middle" xml:space="preserve">0</text><text transform="translate(110.3 444.6) scale(0.940 1)" font-size="12" text-anchor="middle" xml:space="preserve">1</text><text transform="translate(161.0 444.6) scale(0.940 1)" font-size="12" text-anchor="middle" xml:space="preserve">2</text><text transform="translate(211.7 444.6) scale(0.940 1)" font-size="12" text-anchor="middle" xml:space="preserve">3</text><text transform="translate(262.3 444.6) scale(0.940 1)" font-size="12" text-anchor="middle" xml:space="preserve">4</text><text transform="translate(313.0 444.6) scale(0.940 1)" font-size="12" text-anchor="middle" xml:space="preserve">5</text><text transform="translate(363.7 444.6) scale(0.940 1)" font-size="12" text-anchor="middle" xml:space="preserve">6</text><text transform="translate(414.4 444.6) scale(0.940 1)" font-size="12" text-anchor="middle" xml:space="preserve">7</text><text transform="translate(465.1 444.6) scale(0.940 1)" font-size="12" text-anchor="middle" xml:space="preserve">8</text><text transform="translate(515.8 444.6) scale(0.940 1)" font-size="12" text-anchor="middle" xml:space="preserve">9</text><text transform="translate(566.5 444.6) scale(0.940 1)" font-size="12" text-anchor="middle" xml:space="preserve">10</text><text transform="translate(617.2 444.6) scale(0.940 1)" font-size="12" text-anchor="middle" xml:space="preserve">11</text><text transform="translate(667.9 444.6) scale(0.940 1)" font-size="12" text-anchor="middle" xml:space="preserve">12</text><text transform="translate(718.5 444.6) scale(0.940 1)" font-size="12" text-anchor="middle" xml:space="preserve">13</text><text transform="translate(769.2 444.6) scale(0.940 1)" font-size="12" text-anchor="middle" xml:space="preserve">14</text><text transform="translate(819.9 444.6) scale(0.940 1)" font-size="12" text-anchor="middle" xml:space="preserve">15</text><text transform="translate(870.6 444.6) scale(0.940 1)" font-size="12" text-anchor="middle" xml:space="preserve">16</text><text transform="translate(921.3 444.6) scale(0.940 1)" font-size="12" text-anchor="middle" xml:space="preserve">17</text><text transform="translate(972.0 444.6) scale(0.940 1)" font-size="12" text-anchor="middle" xml:space="preserve">18</text><text transform="translate(49.7 57.3) scale(0.940 1)" font-size="12" text-anchor="end" xml:space="preserve">9.5</text><text transform="translate(49.7 76.9) scale(0.940 1)" font-size="12" text-anchor="end" xml:space="preserve">9.0</text><text transform="translate(49.7 96.6) scale(0.940 1)" font-size="12" text-anchor="end" xml:space="preserve">8.5</text><text transform="translate(49.7 116.2) scale(0.940 1)" font-size="12" text-anchor="end" xml:space="preserve">8.0</text><text transform="translate(49.7 135.8) scale(0.940 1)" font-size="12" text-anchor="end" xml:space="preserve">7.5</text><text transform="translate(49.7 155.4) scale(0.940 1)" font-size="12" text-anchor="end" xml:space="preserve">7.0</text><text transform="translate(49.7 175.1) scale(0.940 1)" font-size="12" text-anchor="end" xml:space="preserve">6.5</text><text transform="translate(49.7 194.7) scale(0.940 1)" font-size="12" text-anchor="end" xml:space="preserve">6.0</text><text transform="translate(49.7 214.3) scale(0.940 1)" font-size="12" text-anchor="end" xml:space="preserve">5.5</text><text transform="translate(49.7 234.0) scale(0.940 1)" font-size="12" text-anchor="end" xml:space="preserve">5.0</text><text transform="translate(49.7 253.6) scale(0.940 1)" font-size="12" text-anchor="end" xml:space="preserve">4.5</text><text transform="translate(49.7 273.2) scale(0.940 1)" font-size="12" text-anchor="end" xml:space="preserve">4.0</text><text transform="translate(49.7 292.9) scale(0.940 1)" font-size="12" text-anchor="end" xml:space="preserve">3.5</text><text transform="translate(49.7 312.5) scale(0.940 1)" font-size="12" text-anchor="end" xml:space="preserve">3.0</text><text transform="translate(49.7 332.1) scale(0.940 1)" font-size="12" text-anchor="end" xml:space="preserve">2.5</text><text transform="translate(49.7 351.7) scale(0.940 1)" font-size="12" text-anchor="end" xml:space="preserve">2.0</text><text transform="translate(49.7 371.4) scale(0.940 1)" font-size="12" text-anchor="end" xml:space="preserve">1.5</text><text transform="translate(49.7 391.0) scale(0.940 1)" font-size="12" text-anchor="end" xml:space="preserve">1.0</text><text transform="translate(49.7 410.6) scale(0.940 1)" font-size="12" text-anchor="end" xml:space="preserve">0.5</text><text transform="translate(49.7 430.3) scale(0.940 1)" font-size="12" text-anchor="end" xml:space="preserve">0.0</text></g>
<text transform="translate(259.6 21.8) scale(0.995 1)" font-size="20" font-weight="bold" xml:space="preserve">STW(Kts) v TWS(Kts) Downwind  : TWA [90-&gt;180]</text>
<text transform="translate(538.0 464.4) scale(0.960 1)" font-size="14" font-weight="bold" text-anchor="middle" xml:space="preserve">TWS (Knts)</text>
<text transform="translate(24.6 301.0) rotate(-90)" font-size="14" textLength="153" lengthAdjust="spacingAndGlyphs" stroke="#c4c8cc" stroke-width="0.25">STW (Kts) Downwind</text>
<path d="M203.4 359.7 L833.9 58.2" stroke="#f4f460" stroke-width="0.85" fill="none"/>
<path d="M62.8 417.5 L882.5 53.0" stroke="#f060f0" stroke-width="0.85" fill="none"/>
<path d="M157.5 402.6 L672.3 117.0" stroke="#60f0f0" stroke-width="0.85" fill="none"/>
<circle cx="919.4" cy="59.5" r="1.5" fill="#ee5558"/><circle cx="961.7" cy="63.3" r="1.5" fill="#ee5558"/><circle cx="967.8" cy="68.5" r="1.5" fill="#ee5558"/><circle cx="876.0" cy="61.4" r="1.5" fill="#ee5558"/><circle cx="860.6" cy="67.5" r="1.5" fill="#ee5558"/><circle cx="912.0" cy="80.5" r="1.5" fill="#ee5558"/><circle cx="899.9" cy="84.3" r="1.5" fill="#ee5558"/><circle cx="896.9" cy="86.3" r="1.5" fill="#ee5558"/><circle cx="890.3" cy="80.5" r="1.5" fill="#ee5558"/><circle cx="876.5" cy="93.4" r="1.5" fill="#ee5558"/><circle cx="859.8" cy="104.4" r="1.5" fill="#ee5558"/><circle cx="832.0" cy="83.4" r="1.5" fill="#ee5558"/><circle cx="837.2" cy="95.3" r="1.5" fill="#ee5558"/><circle cx="837.2" cy="99.2" r="1.5" fill="#ee5558"/><circle cx="833.4" cy="99.2" r="1.5" fill="#ee5558"/><circle cx="783.3" cy="70.4" r="1.5" fill="#ee5558"/><circle cx="731.4" cy="63.3" r="1.5" fill="#ee5558"/><circle cx="669.0" cy="74.3" r="1.5" fill="#ee5558"/><circle cx="755.0" cy="82.1" r="1.5" fill="#ee5558"/><circle cx="761.1" cy="82.1" r="1.5" fill="#ee5558"/><circle cx="766.3" cy="80.5" r="1.5" fill="#ee5558"/><circle cx="771.5" cy="87.6" r="1.5" fill="#ee5558"/><circle cx="789.1" cy="85.3" r="1.5" fill="#ee5558"/><circle cx="727.8" cy="86.3" r="1.5" fill="#ee5558"/><circle cx="719.6" cy="90.5" r="1.5" fill="#ee5558"/><circle cx="697.3" cy="85.3" r="1.5" fill="#ee5558"/><circle cx="702.0" cy="85.3" r="1.5" fill="#ee5558"/><circle cx="680.8" cy="91.4" r="1.5" fill="#ee5558"/><circle cx="681.4" cy="93.4" r="1.5" fill="#ee5558"/><circle cx="647.0" cy="83.4" r="1.5" fill="#ee5558"/><circle cx="635.5" cy="88.5" r="1.5" fill="#ee5558"/><circle cx="630.5" cy="89.5" r="1.5" fill="#ee5558"/><circle cx="659.4" cy="89.5" r="1.5" fill="#ee5558"/><circle cx="650.3" cy="95.3" r="1.5" fill="#ee5558"/><circle cx="656.1" cy="97.6" r="1.5" fill="#ee5558"/><circle cx="652.2" cy="101.4" r="1.5" fill="#ee5558"/><circle cx="624.2" cy="99.5" r="1.5" fill="#ee5558"/><circle cx="608.8" cy="101.4" r="1.5" fill="#ee5558"/><circle cx="598.6" cy="101.4" r="1.5" fill="#ee5558"/><circle cx="578.3" cy="97.2" r="1.5" fill="#ee5558"/><circle cx="598.9" cy="111.1" r="1.5" fill="#ee5558"/><circle cx="634.6" cy="108.2" r="1.5" fill="#ee5558"/><circle cx="645.6" cy="109.8" r="1.5" fill="#ee5558"/><circle cx="743.5" cy="101.4" r="1.5" fill="#ee5558"/><circle cx="776.5" cy="102.4" r="1.5" fill="#ee5558"/><circle cx="799.8" cy="111.5" r="1.5" fill="#ee5558"/><circle cx="801.2" cy="114.4" r="1.5" fill="#ee5558"/><circle cx="807.5" cy="108.2" r="1.5" fill="#ee5558"/><circle cx="819.9" cy="112.1" r="1.5" fill="#ee5558"/><circle cx="821.3" cy="117.3" r="1.5" fill="#ee5558"/><circle cx="789.1" cy="118.2" r="1.5" fill="#ee5558"/><circle cx="802.3" cy="123.4" r="1.5" fill="#ee5558"/><circle cx="780.3" cy="125.3" r="1.5" fill="#ee5558"/><circle cx="764.7" cy="118.2" r="1.5" fill="#ee5558"/><circle cx="766.6" cy="125.3" r="1.5" fill="#ee5558"/><circle cx="733.6" cy="125.3" r="1.5" fill="#ee5558"/><circle cx="725.1" cy="131.5" r="1.5" fill="#ee5558"/><circle cx="708.6" cy="135.4" r="1.5" fill="#ee5558"/><circle cx="727.8" cy="140.2" r="1.5" fill="#ee5558"/><circle cx="742.4" cy="145.4" r="1.5" fill="#ee5558"/><circle cx="707.5" cy="147.3" r="1.5" fill="#ee5558"/><circle cx="696.5" cy="149.2" r="1.5" fill="#ee5558"/><circle cx="691.5" cy="152.5" r="1.5" fill="#ee5558"/><circle cx="679.2" cy="142.5" r="1.5" fill="#ee5558"/><circle cx="651.4" cy="158.3" r="1.5" fill="#ee5558"/><circle cx="640.4" cy="151.5" r="1.5" fill="#ee5558"/><circle cx="557.7" cy="147.3" r="1.5" fill="#ee5558"/><circle cx="524.7" cy="196.1" r="1.5" fill="#ee5558"/><circle cx="285.4" cy="299.2" r="1.5" fill="#ee5558"/><circle cx="262.4" cy="334.5" r="1.5" fill="#ee5558"/><circle cx="366.5" cy="254.1" r="1.5" fill="#ee5558"/><circle cx="457.1" cy="217.6" r="1.5" fill="#ee5558"/><circle cx="308.4" cy="307.5" r="1.5" fill="#ee5558"/><circle cx="218.3" cy="360.3" r="1.5" fill="#ee5558"/>
<circle cx="797.6" cy="54.3" r="1.5" fill="#524ade"/><circle cx="884.2" cy="78.5" r="1.5" fill="#524ade"/><circle cx="891.4" cy="79.5" r="1.5" fill="#524ade"/><circle cx="862.8" cy="89.5" r="1.5" fill="#524ade"/><circle cx="866.1" cy="91.4" r="1.5" fill="#524ade"/><circle cx="875.2" cy="91.4" r="1.5" fill="#524ade"/><circle cx="880.4" cy="120.5" r="1.5" fill="#524ade"/><circle cx="834.2" cy="86.6" r="1.5" fill="#524ade"/><circle cx="837.2" cy="85.6" r="1.5" fill="#524ade"/><circle cx="834.7" cy="91.4" r="1.5" fill="#524ade"/><circle cx="813.0" cy="94.3" r="1.5" fill="#524ade"/><circle cx="801.2" cy="96.3" r="1.5" fill="#524ade"/><circle cx="785.8" cy="92.4" r="1.5" fill="#524ade"/><circle cx="813.0" cy="108.2" r="1.5" fill="#524ade"/><circle cx="816.6" cy="106.3" r="1.5" fill="#524ade"/><circle cx="820.7" cy="106.3" r="1.5" fill="#524ade"/><circle cx="806.2" cy="117.3" r="1.5" fill="#524ade"/><circle cx="826.5" cy="118.2" r="1.5" fill="#524ade"/><circle cx="816.6" cy="128.2" r="1.5" fill="#524ade"/><circle cx="800.1" cy="129.2" r="1.5" fill="#524ade"/><circle cx="766.6" cy="129.2" r="1.5" fill="#524ade"/><circle cx="766.3" cy="134.4" r="1.5" fill="#524ade"/><circle cx="840.0" cy="154.4" r="1.5" fill="#524ade"/><circle cx="719.6" cy="112.4" r="1.5" fill="#524ade"/><circle cx="626.1" cy="111.5" r="1.5" fill="#524ade"/><circle cx="648.9" cy="132.4" r="1.5" fill="#524ade"/><circle cx="655.0" cy="129.2" r="1.5" fill="#524ade"/><circle cx="598.6" cy="142.5" r="1.5" fill="#524ade"/><circle cx="596.2" cy="160.2" r="1.5" fill="#524ade"/><circle cx="608.8" cy="170.2" r="1.5" fill="#524ade"/><circle cx="570.9" cy="165.4" r="1.5" fill="#524ade"/><circle cx="574.7" cy="168.3" r="1.5" fill="#524ade"/><circle cx="576.6" cy="171.2" r="1.5" fill="#524ade"/><circle cx="563.2" cy="168.3" r="1.5" fill="#524ade"/><circle cx="581.6" cy="175.1" r="1.5" fill="#524ade"/><circle cx="582.4" cy="179.3" r="1.5" fill="#524ade"/><circle cx="584.6" cy="184.4" r="1.5" fill="#524ade"/><circle cx="540.9" cy="182.2" r="1.5" fill="#524ade"/><circle cx="522.8" cy="200.3" r="1.5" fill="#524ade"/><circle cx="528.0" cy="203.2" r="1.5" fill="#524ade"/><circle cx="554.4" cy="205.4" r="1.5" fill="#524ade"/><circle cx="514.5" cy="216.4" r="1.5" fill="#524ade"/><circle cx="630.2" cy="173.1" r="1.5" fill="#524ade"/><circle cx="648.1" cy="167.3" r="1.5" fill="#524ade"/><circle cx="653.9" cy="177.3" r="1.5" fill="#524ade"/><circle cx="673.7" cy="157.3" r="1.5" fill="#524ade"/><circle cx="681.6" cy="156.3" r="1.5" fill="#524ade"/><circle cx="688.8" cy="149.2" r="1.5" fill="#524ade"/><circle cx="689.9" cy="163.1" r="1.5" fill="#524ade"/><circle cx="723.7" cy="147.3" r="1.5" fill="#524ade"/><circle cx="727.3" cy="163.1" r="1.5" fill="#524ade"/><circle cx="731.7" cy="157.3" r="1.5" fill="#524ade"/><circle cx="746.5" cy="149.2" r="1.5" fill="#524ade"/><circle cx="747.9" cy="157.3" r="1.5" fill="#524ade"/><circle cx="225.6" cy="270.0" r="1.5" fill="#524ade"/><circle cx="291.6" cy="253.5" r="1.5" fill="#524ade"/><circle cx="299.4" cy="289.4" r="1.5" fill="#524ade"/><circle cx="304.8" cy="306.5" r="1.5" fill="#524ade"/><circle cx="304.0" cy="309.1" r="1.5" fill="#524ade"/><circle cx="316.5" cy="284.3" r="1.5" fill="#524ade"/><circle cx="317.0" cy="217.6" r="1.5" fill="#524ade"/><circle cx="333.0" cy="229.3" r="1.5" fill="#524ade"/><circle cx="329.7" cy="255.4" r="1.5" fill="#524ade"/><circle cx="334.3" cy="266.2" r="1.5" fill="#524ade"/><circle cx="351.6" cy="264.3" r="1.5" fill="#524ade"/><circle cx="357.6" cy="216.3" r="1.5" fill="#524ade"/><circle cx="362.7" cy="212.2" r="1.5" fill="#524ade"/><circle cx="330.0" cy="301.1" r="1.5" fill="#524ade"/><circle cx="342.2" cy="304.3" r="1.5" fill="#524ade"/><circle cx="344.3" cy="290.3" r="1.5" fill="#524ade"/><circle cx="351.6" cy="309.4" r="1.5" fill="#524ade"/><circle cx="341.9" cy="324.3" r="1.5" fill="#524ade"/><circle cx="348.1" cy="332.2" r="1.5" fill="#524ade"/><circle cx="316.5" cy="325.9" r="1.5" fill="#524ade"/><circle cx="318.4" cy="327.5" r="1.5" fill="#524ade"/><circle cx="302.1" cy="326.2" r="1.5" fill="#524ade"/><circle cx="380.0" cy="286.2" r="1.5" fill="#524ade"/><circle cx="389.5" cy="256.3" r="1.5" fill="#524ade"/><circle cx="399.2" cy="239.2" r="1.5" fill="#524ade"/><circle cx="399.8" cy="226.5" r="1.5" fill="#524ade"/><circle cx="409.8" cy="258.2" r="1.5" fill="#524ade"/><circle cx="430.1" cy="254.4" r="1.5" fill="#524ade"/><circle cx="429.8" cy="220.1" r="1.5" fill="#524ade"/><circle cx="431.4" cy="213.4" r="1.5" fill="#524ade"/><circle cx="431.4" cy="234.4" r="1.5" fill="#524ade"/><circle cx="452.0" cy="186.1" r="1.5" fill="#524ade"/><circle cx="466.3" cy="171.2" r="1.5" fill="#524ade"/><circle cx="475.8" cy="201.4" r="1.5" fill="#524ade"/><circle cx="148.3" cy="418.4" r="1.5" fill="#524ade"/><circle cx="151.2" cy="394.3" r="1.5" fill="#524ade"/><circle cx="188.0" cy="370.5" r="1.5" fill="#524ade"/><circle cx="197.2" cy="398.1" r="1.5" fill="#524ade"/><circle cx="238.0" cy="355.5" r="1.5" fill="#524ade"/><circle cx="254.0" cy="366.3" r="1.5" fill="#524ade"/><circle cx="252.1" cy="343.5" r="1.5" fill="#524ade"/><circle cx="268.3" cy="398.1" r="1.5" fill="#524ade"/><circle cx="277.3" cy="353.3" r="1.5" fill="#524ade"/><circle cx="281.0" cy="344.4" r="1.5" fill="#524ade"/><circle cx="294.8" cy="344.4" r="1.5" fill="#524ade"/>
<circle cx="534.0" cy="149.2" r="1.5" fill="#6cec6c"/><circle cx="576.9" cy="155.4" r="1.5" fill="#6cec6c"/><circle cx="608.0" cy="150.5" r="1.5" fill="#6cec6c"/><circle cx="624.2" cy="152.5" r="1.5" fill="#6cec6c"/><circle cx="601.4" cy="169.3" r="1.5" fill="#6cec6c"/><circle cx="641.2" cy="181.2" r="1.5" fill="#6cec6c"/><circle cx="656.4" cy="183.1" r="1.5" fill="#6cec6c"/><circle cx="719.6" cy="162.5" r="1.5" fill="#6cec6c"/><circle cx="755.0" cy="117.3" r="1.5" fill="#6cec6c"/><circle cx="810.3" cy="143.1" r="1.5" fill="#6cec6c"/><circle cx="522.5" cy="181.2" r="1.5" fill="#6cec6c"/><circle cx="506.0" cy="173.1" r="1.5" fill="#6cec6c"/><circle cx="506.6" cy="190.2" r="1.5" fill="#6cec6c"/><circle cx="559.6" cy="200.3" r="1.5" fill="#6cec6c"/><circle cx="251.3" cy="323.4" r="1.5" fill="#6cec6c"/><circle cx="266.2" cy="307.5" r="1.5" fill="#6cec6c"/><circle cx="311.6" cy="320.2" r="1.5" fill="#6cec6c"/><circle cx="344.1" cy="294.1" r="1.5" fill="#6cec6c"/><circle cx="360.6" cy="261.1" r="1.5" fill="#6cec6c"/><circle cx="419.8" cy="225.5" r="1.5" fill="#6cec6c"/><circle cx="428.4" cy="233.8" r="1.5" fill="#6cec6c"/><circle cx="437.9" cy="228.0" r="1.5" fill="#6cec6c"/><circle cx="452.8" cy="177.8" r="1.5" fill="#6cec6c"/><circle cx="472.0" cy="182.3" r="1.5" fill="#6cec6c"/><circle cx="471.2" cy="209.3" r="1.5" fill="#6cec6c"/><circle cx="485.2" cy="201.4" r="1.5" fill="#6cec6c"/><circle cx="494.4" cy="220.1" r="1.5" fill="#6cec6c"/><circle cx="505.8" cy="173.1" r="1.5" fill="#6cec6c"/><circle cx="505.8" cy="189.9" r="1.5" fill="#6cec6c"/><circle cx="188.0" cy="393.3" r="1.5" fill="#6cec6c"/><circle cx="199.4" cy="373.3" r="1.5" fill="#6cec6c"/><circle cx="201.5" cy="385.4" r="1.5" fill="#6cec6c"/><circle cx="240.5" cy="372.4" r="1.5" fill="#6cec6c"/><circle cx="250.8" cy="375.2" r="1.5" fill="#6cec6c"/><circle cx="240.5" cy="403.5" r="1.5" fill="#6cec6c"/><circle cx="263.5" cy="349.5" r="1.5" fill="#6cec6c"/>
<rect x="155.3" y="477.0" width="713.3" height="20.4" fill="none" stroke="#08080e" stroke-width="1.3"/>
<circle cx="165.6" cy="486.5" r="1.5" fill="#ee5558"/><text transform="translate(176.2 491.8) scale(0.940 1)" font-size="12" xml:space="preserve">North A2</text>
<circle cx="236.2" cy="486.5" r="1.5" fill="#524ade"/><text transform="translate(246.8 491.8) scale(0.940 1)" font-size="12" xml:space="preserve">North A1.5</text>
<circle cx="317.1" cy="486.5" r="1.5" fill="#6cec6c"/><text transform="translate(327.7 491.8) scale(0.940 1)" font-size="12" xml:space="preserve">Elvstrom C1 Jib Non Overlap</text>
<path d="M477.4 487.0 h14" stroke="#f4f460" stroke-width="1.15"/><text transform="translate(494.6 491.8) scale(0.940 1)" font-size="12" xml:space="preserve">North A2 Line</text>
<path d="M572.7 487.0 h14" stroke="#f060f0" stroke-width="1.15"/><text transform="translate(590.7 491.8) scale(0.940 1)" font-size="12" xml:space="preserve">North A1.5 Line</text>
<path d="M678.3 487.0 h14" stroke="#60f0f0" stroke-width="1.15"/><text transform="translate(696.3 491.8) scale(0.940 1)" font-size="12" xml:space="preserve">Elvstrom C1 Jib Non Overlap Line</text>
</g>
</svg>
</body></html>
